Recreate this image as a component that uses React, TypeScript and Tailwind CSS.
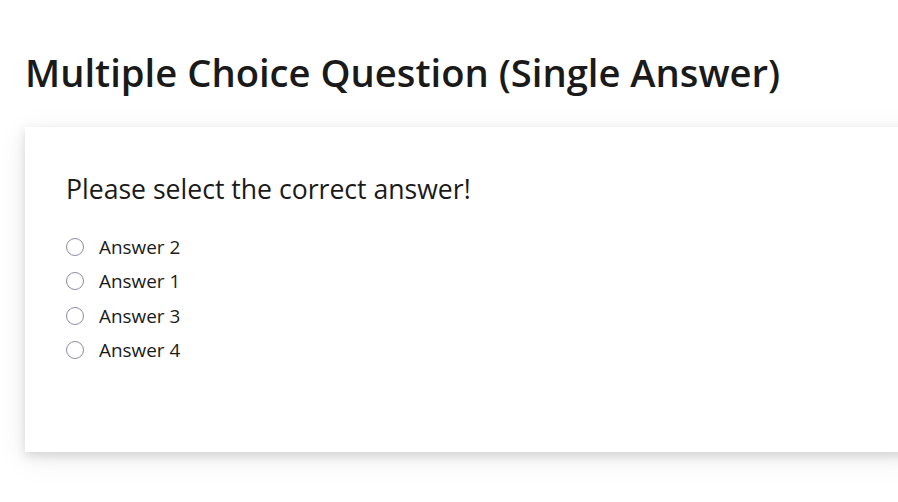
export default function App() {
  const answers = ["Answer 2", "Answer 1", "Answer 3", "Answer 4"];
  return (
    <div className="min-h-[502px] bg-white overflow-hidden" style={{ fontFamily: '"Open Sans", sans-serif' }}>
      <h1 className="pl-[25px] pt-[46px] text-[38.2px] leading-[52px] font-semibold text-[#1a1a1a]">
        Multiple Choice Question (Single Answer)
      </h1>
      <div className="ml-[25px] mt-[29px] mr-[-20px] h-[325px] bg-white shadow-[0_4px_10px_rgba(0,0,0,0.13),0_6px_30px_rgba(0,0,0,0.08)] pl-[41px] pt-[43px]">
        <p className="text-[26.6px] leading-[38px] text-[#1a1a1a]">Please select the correct answer!</p>
        <div className="mt-[22px] flex flex-col">
          {answers.map((a) => (
            <label key={a} className="flex items-center h-[34.3px] gap-[15px]">
              <span className="w-[18px] h-[18px] rounded-full border border-[#8f8aa3] bg-white" />
              <span className="text-[18.9px] text-[#1a1a1a]">{a}</span>
            </label>
          ))}
        </div>
      </div>
    </div>
  );
}
